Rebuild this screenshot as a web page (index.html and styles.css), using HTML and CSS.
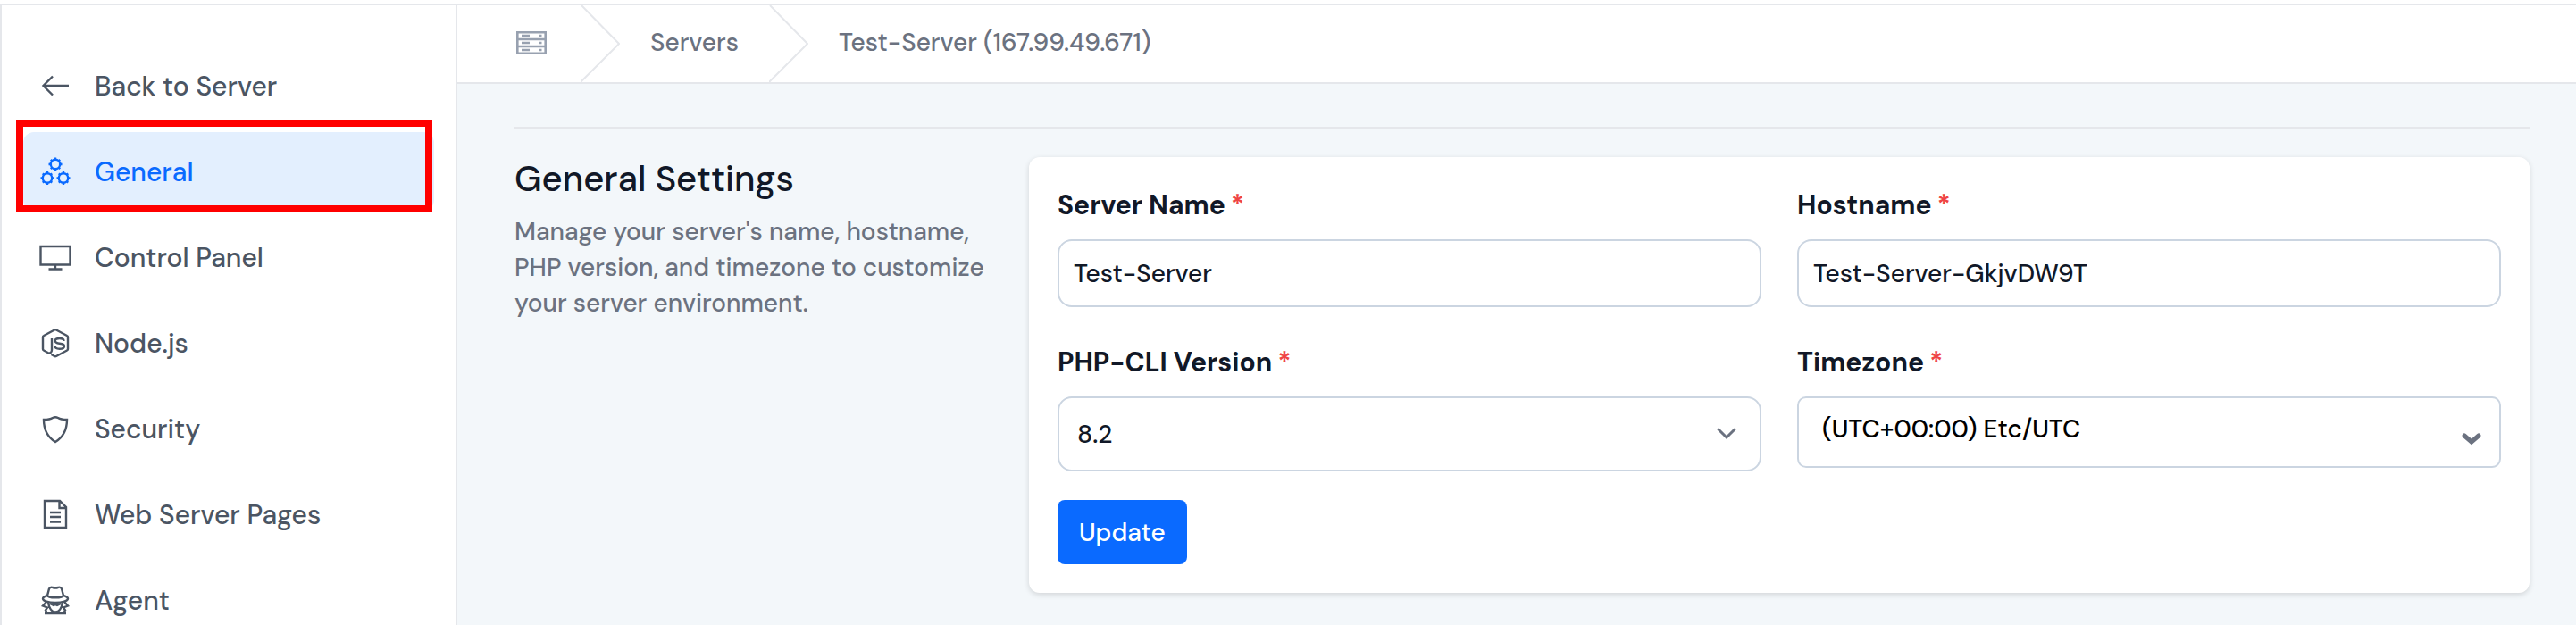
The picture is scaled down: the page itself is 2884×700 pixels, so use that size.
FILE: index.html
```html
<!DOCTYPE html>
<html lang="en">
<head>
  <meta charset="UTF-8">
  <meta name="viewport" content="width=device-width, initial-scale=1.0">
  <title>General Settings</title>
  <link rel="stylesheet" href="styles.css">
</head>
<body>
  <div class="layout">
    <nav class="sidebar">
      <a class="nav-item" href="#">
        <svg class="nav-icon" viewBox="0 0 36 36"><path d="M33 18H4M15 7.500L4.500 18 15 28.500"/></svg>
        Back to Server
      </a>
      <a class="nav-item active" href="#">
        <svg class="nav-icon" viewBox="0 0 36 36">
          <g id="gear">
            <circle cx="18" cy="10" r="5.200"/>
            <path d="M18 5V2.500M18 15v2.500M13 10h-2.500M23 10h2.500M14.500 6.500l-1.700-1.700M21.500 6.500l1.700-1.700M14.500 13.500l-1.700 1.700M21.500 13.500l1.700 1.700"/>
          </g>
          <use href="#gear" x="-9" y="15.500"/>
          <use href="#gear" x="9" y="15.500"/>
        </svg>
        General
        <span class="highlight"></span>
      </a>
      <a class="nav-item" href="#">
        <svg class="nav-icon" viewBox="0 0 36 36"><path d="M1.500 6h33v20.500h-33zM18 26v5M10.500 31.500h15"/></svg>
        Control Panel
      </a>
      <a class="nav-item" href="#">
        <svg class="nav-icon" viewBox="0 0 36 36">
          <path d="M14 13v13c0 3-2 4-4.500 3L5 26.500Q4 26 4 25V11.500Q4 10.500 5 10L17 3.500q1-.5 2 0L31 10q1 .5 1 1.500V25q0 1-1 1.500L19 33q-1 .5-2 0l-3.500-2"/>
          <path d="M27.500 16c0-2.200-1.500-3-4.800-3s-5 .8-5 2.800c0 2.200 1.800 2.600 5 2.900s5.300.8 5.300 3-2 3-5.300 3-5.200-1-5.200-3.200"/>
        </svg>
        Node.js
      </a>
      <a class="nav-item" href="#">
        <svg class="nav-icon" viewBox="0 0 36 36"><path d="M5 8q7 0 10-2 3-1.500 6 0 3 2 10 2c0 12-4 19.500-13 25C9 27.500 5 20 5 8z"/></svg>
        Security
      </a>
      <a class="nav-item" href="#">
        <svg class="nav-icon" viewBox="0 0 36 36"><path d="M6 3h17l7 7v23H6zM22.500 3v8H30M12 16h12M12 21h12M12 26.500h12"/></svg>
        Web Server Pages
      </a>
      <a class="nav-item" href="#">
        <svg class="nav-icon" viewBox="0 0 36 36">
          <path d="M9 13l2-7.500C12 3.500 14 3.500 15 4q3 1 6 0c1-.5 3-.5 4 1.500l2 7.500"/>
          <path d="M9 13c-3 .8-5 1.800-5 3.500C4 19 10 21 18 21s14-2 14-4.500c0-1.700-2-2.700-5-3.500-1 3-17 3-18 0z"/>
          <path d="M8 20l-4 4.500 5 2-2 3 2 3.500M28 20l4 4.500-5 2 2 3-2 3.500M10 21c1 6 4 10.500 8 10.500s7-4.500 8-10.500M6 33h24M12 22l4 2 2-1 2 1 4-2"/>
        </svg>
        Agent
      </a>
    </nav>

    <main class="main">
      <nav class="breadcrumb" aria-label="Breadcrumb">
        <a class="crumb crumb-home" href="#" aria-label="Home">
          <svg class="server-icon" viewBox="0 0 34 26">
            <path d="M1.300 1.300h31.400v23.400H1.300zM1 9h32M1 17h32"/>
            <path d="M6 5h9M6 13h9M6 21h9M26 5h2.500M26 13h2.500M26 21h2.500"/>
          </svg>
        </a>
        <svg class="crumb-arrow" viewBox="0 0 44 86"><path d="M1 0l42 43L0 86"/></svg>
        <a class="crumb" href="#">Servers</a>
        <svg class="crumb-arrow" viewBox="0 0 44 86"><path d="M1 0l42 43L0 86"/></svg>
        <a class="crumb" href="#">Test-Server (167.99.49.671)</a>
      </nav>

      <div class="content">
        <section class="settings">
          <div class="intro">
            <h1>General Settings</h1>
            <p>Manage your server's name, hostname, PHP version, and timezone to customize your server environment.</p>
          </div>

          <form class="card">
            <div class="fields">
              <div class="field">
                <label for="name">Server Name<span class="required">*</span></label>
                <input type="text" id="name" value="Test-Server">
              </div>
              <div class="field">
                <label for="hostname">Hostname<span class="required">*</span></label>
                <input type="text" id="hostname" value="Test-Server-GkjvDW9T">
              </div>
              <div class="field">
                <label for="php">PHP-CLI Version<span class="required">*</span></label>
                <div class="select">
                  <select id="php">
                    <option>8.2</option>
                  </select>
                  <svg class="chevron" viewBox="0 0 24 24"><path d="M3 7l9 9 9-9"/></svg>
                </div>
              </div>
              <div class="field">
                <label for="timezone">Timezone<span class="required">*</span></label>
                <div class="select timezone">
                  <select id="timezone">
                    <option>(UTC+00:00) Etc/UTC</option>
                  </select>
                  <svg class="chevron" viewBox="0 0 24 24"><path d="M4 8l8 7 8-7"/></svg>
                </div>
              </div>
            </div>
            <button type="button" class="update">Update</button>
          </form>
        </section>
      </div>
    </main>
  </div>
</body>
</html>
```
FILE: styles.css
```css
* {
  box-sizing: border-box;
}

body {
  margin: 0;
  padding-top: 4px;
  height: 100vh;
  overflow: hidden;
  background: #ffffff;
  font-family: 'DM Sans', Inter, sans-serif;
  font-size: 28px;
  font-weight: 500;
  color: #111827;
}

.layout {
  display: flex;
  height: 100%;
  overflow: hidden;
  border-top: 2px solid #e5e7eb;
}

.sidebar {
  display: flex;
  flex-direction: column;
  gap: 8px;
  flex: 0 0 512px;
  padding: 46px 24px 0;
  border-left: 2px solid #e5e7eb;
  border-right: 2px solid #e5e7eb;
}

.nav-item {
  position: relative;
  display: flex;
  flex-shrink: 0;
  align-items: center;
  gap: 26px;
  height: 88px;
  padding: 0 18px;
  border-radius: 12px;
  color: #4b5563;
  font-size: 30px;
  text-decoration: none;
}

.nav-item.active {
  background: #e3effe;
  color: #0a6aff;
}

.nav-icon {
  width: 36px;
  height: 36px;
  fill: none;
  stroke: currentColor;
  stroke-width: 2.4;
}

.highlight {
  position: absolute;
  top: -14px;
  right: 2px;
  bottom: -2px;
  left: -8px;
  border: 8px solid #ff0000;
}

.main {
  flex: 1;
  min-width: 0;
  background: #f3f7fa;
}

.breadcrumb {
  display: flex;
  align-items: center;
  height: 88px;
  padding-left: 66px;
  background: #ffffff;
  border-bottom: 2px solid #e5e7eb;
}

.crumb {
  padding: 0 34px 4px;
  color: #6b7280;
  text-decoration: none;
}

.crumb-home {
  display: flex;
  padding: 0 38px 2px 0;
}

.server-icon {
  width: 34px;
  height: 26px;
  fill: none;
  stroke: #98a1b0;
  stroke-width: 2.6;
}

.crumb-arrow {
  width: 44px;
  height: 86px;
  fill: none;
  stroke: #e5e7eb;
  stroke-width: 2;
}

.content {
  padding: 48px 52px 0 64px;
}

.settings {
  display: grid;
  grid-template-columns: 1fr 3fr;
  gap: 16px;
  padding-top: 32px;
  border-top: 2px solid #e5e7eb;
}

.intro {
  padding-right: 24px;
}

h1 {
  margin: 0 0 16px;
  font-size: 40px;
  line-height: 48px;
  font-weight: 500;
}

p {
  margin: 0;
  line-height: 40px;
  color: #6b7280;
}

.card {
  padding: 32px;
  background: #ffffff;
  border-radius: 12px;
  box-shadow: 0 2px 6px rgba(0, 0, 0, 0.14);
}

.fields {
  display: grid;
  grid-template-columns: 1fr 1fr;
  gap: 40px;
  align-items: start;
}

.field {
  display: flex;
  flex-direction: column;
  gap: 16px;
}

label {
  line-height: 44px;
  font-size: 30px;
  font-weight: 700;
}

.required {
  margin-left: 6px;
  color: #ef4444;
}

input,
select {
  width: 100%;
  height: 76px;
  padding: 0 16px;
  border: 2px solid #cbd5e1;
  border-radius: 16px;
  background: #ffffff;
  color: #111827;
  font: inherit;
}

.select {
  position: relative;
}

select {
  display: block;
  height: 84px;
  padding: 0 20px;
  appearance: none;
}

.timezone select {
  height: 80px;
  padding: 0 26px 8px;
  border-radius: 10px;
  color: #000000;
}

.chevron {
  position: absolute;
  top: 30px;
  right: 27px;
  width: 24px;
  height: 24px;
  fill: none;
  stroke: #6b7280;
  stroke-width: 3;
  stroke-linecap: round;
}

.timezone .chevron {
  top: 36px;
  right: 21px;
  stroke-width: 5;
}

.update {
  display: block;
  height: 72px;
  margin-top: 32px;
  padding: 0 24px;
  border: none;
  border-radius: 8px;
  background: #0a6aff;
  color: #ffffff;
  font: inherit;
}
```
